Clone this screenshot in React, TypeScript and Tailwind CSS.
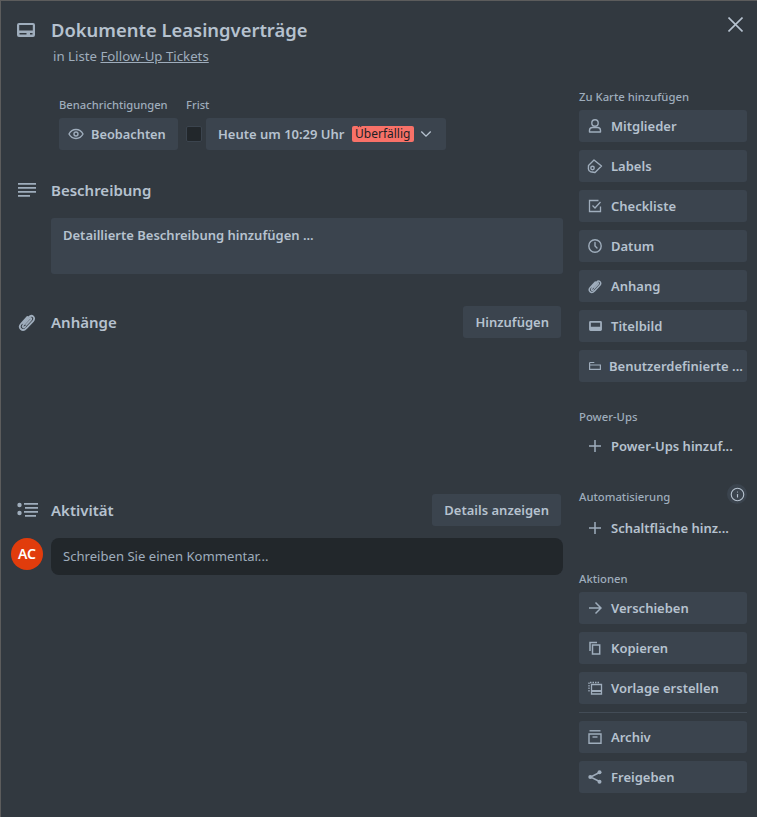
import { ReactNode } from 'react'
import { Info } from 'lucide-react'

const Paperclip = ({ size = 16 }: { size?: number }) => (
  <svg width={size} height={size} viewBox="0 0 24 24" fill="none" stroke="currentColor" strokeWidth="2.2" strokeLinecap="round">
    <path d="M7.500 13.500l6.800-7.300c1.600-1.700 3.900-1.900 5.300-.6 1.400 1.300 1.300 3.600-.3 5.300l-8 8.500c-2.200 2.300-5 2.600-6.700 1-1.700-1.600-1.500-4.300.6-6.600L12.500 6" />
    <path d="M11 15.500l5.600-6c.7-.8.8-1.600.3-2.100-.6-.5-1.400-.4-2.100.4l-7.200 7.700c-1 1.100-1.100 2.100-.5 2.700.7.6 1.700.4 2.700-.6" />
  </svg>
)

const cardOutline = 'M2 0h14a2 2 0 0 1 2 2v10a2 2 0 0 1-2 2H2a2 2 0 0 1-2-2V2a2 2 0 0 1 2-2z'

const CardIcon = () => (
  <svg width="18" height="14" viewBox="0 0 18 14" fill="currentColor">
    <path fillRule="evenodd" d={`${cardOutline}M2.200 2v5.600h13.600V2zM2.500 10v1.600h7V10zM13 10v1.600h2.500V10z`} />
  </svg>
)

const CoverIcon = () => (
  <svg width="13" height="10" viewBox="0 0 18 14" fill="currentColor">
    <path fillRule="evenodd" d={`${cardOutline}M2.500 2.500v5.500h13V2.500z`} />
  </svg>
)

const sideIcons: Record<string, ReactNode> = {
  user: (
    <svg width="16" height="16" viewBox="0 0 16 16" fill="none" stroke="currentColor" strokeWidth="1.400">
      <circle cx="8" cy="5" r="3.200" />
      <path d="M2.500 14v-1.500c0-1.600 1.300-3 3-3h5c1.700 0 3 1.400 3 3V14z" strokeLinejoin="round" />
    </svg>
  ),
  label: (
    <svg width="16" height="16" viewBox="0 0 16 16" fill="none" stroke="currentColor" strokeWidth="1.400" strokeLinejoin="round">
      <path d="M7 2l7.500 6L8 14.500l-4.500-.8c-1.300-.5-2-1.300-2.100-2.700L1.500 7.500z" />
      <circle cx="5.500" cy="10" r="1.700" />
    </svg>
  ),
  check: (
    <svg width="16" height="16" viewBox="0 0 16 16" fill="none" stroke="currentColor" strokeWidth="1.300">
      <path d="M13.500 8.500v5h-11v-11h9" />
      <path d="M5.500 7.500L8 10l5.500-6" />
    </svg>
  ),
  clock: (
    <svg width="16" height="16" viewBox="0 0 16 16" fill="none" stroke="currentColor" strokeWidth="1.400" strokeLinecap="round">
      <circle cx="8" cy="8" r="6.200" />
      <path d="M8 4.500V8l2 2" />
    </svg>
  ),
  clip: <Paperclip size={16} />,
  cover: <CoverIcon />,
  custom: (
    <svg width="12" height="12" viewBox="0 0 12 12" fill="none" stroke="currentColor" strokeWidth="1.200">
      <path d="M.6 5h10.800v4.400H.6z" />
      <path d="M.6 5V3.200c0-.4.300-.7.700-.7h4" />
    </svg>
  ),
  plus: (
    <svg width="14" height="14" viewBox="0 0 14 14" stroke="currentColor" strokeWidth="1.500">
      <path d="M7 1v12M1 7h12" />
    </svg>
  ),
  arrow: (
    <svg width="14" height="14" viewBox="0 0 14 14" fill="none" stroke="currentColor" strokeWidth="1.500">
      <path d="M1 7h12M7.500 1.500L13 7l-5.500 5.500" />
    </svg>
  ),
  copy: (
    <svg width="16" height="16" viewBox="0 0 16 16" fill="none" stroke="currentColor" strokeWidth="1.500">
      <path d="M5.500 5h7.200v9H5.500z" />
      <path d="M3 11V2.500h7" />
    </svg>
  ),
  template: (
    <svg width="16" height="16" viewBox="0 0 16 16" fill="none" stroke="currentColor" strokeWidth="1.300">
      <path d="M4.500 4.500h10v9.500h-10z" />
      <path d="M4.500 11h10" strokeWidth="2" />
      <path d="M2 11.500v-9h10" strokeDasharray="1.500 1" />
    </svg>
  ),
  archive: (
    <svg width="16" height="16" viewBox="0 0 16 16" fill="none" stroke="currentColor" strokeWidth="1.400">
      <path d="M2.500 1.800h11" />
      <path d="M2 5h12v9.200H2z" />
      <path d="M5.500 8h5" />
    </svg>
  ),
  share: (
    <svg width="16" height="16" viewBox="0 0 16 16" fill="currentColor">
      <path d="M12.500 3.500L3.500 8l9 4.500" fill="none" stroke="currentColor" strokeWidth="1.400" />
      <circle cx="12.500" cy="3.200" r="2" />
      <circle cx="3.300" cy="8" r="2" />
      <circle cx="12.500" cy="12.800" r="2" />
    </svg>
  ),
}

function SideButton({ icon, label, flat, tight }: { icon: string; label: string; flat?: boolean; tight?: boolean }) {
  return (
    <button className={`flex h-8 w-[168px] items-center rounded-[3px] pl-[8px] text-[13px] font-semibold whitespace-nowrap text-[#b6c2cf] ${flat ? '' : 'bg-[#3b444e]'} ${tight ? 'gap-[6px]' : 'gap-2'}`}>
      <span className="flex w-[16px] shrink-0 justify-center text-[#9fadbc]">{sideIcons[icon]}</span>
      <span className="pt-[2px]">{label}</span>
    </button>
  )
}

function SideLabel({ children, gap }: { children: ReactNode; gap?: boolean }) {
  return <div className={`h-[16px] text-[11.3px] leading-4 font-medium text-[#9fadbc] ${gap ? 'mb-[7px]' : 'mb-[5px]'}`}>{children}</div>
}

function SectionHead({ icon, title, action }: { icon: ReactNode; title: string; action?: string }) {
  return (
    <div className="flex h-8 items-center">
      <span className="flex w-[34px] shrink-0 text-[#9fadbc]">{icon}</span>
      <h3 className="text-[15px] font-semibold text-[#b6c2cf]">{title}</h3>
      {action && (
        <button className="mr-[2px] ml-auto h-8 rounded-[3px] bg-[#3b444e] px-3 pt-[2px] text-[13px] font-semibold text-[#b6c2cf]">
          {action}
        </button>
      )}
    </div>
  )
}

export default function App() {
  return (
    <div className="h-[817px] w-[757px] overflow-hidden border-t border-l border-[#5c5c5c] bg-[#323940] font-['Noto_Sans',sans-serif]">
      <div className="relative flex">
        <button className="absolute top-[16px] right-[14px] text-[#b6c2cf]">
          <svg className="block" width="15" height="15" viewBox="0 0 15 15" stroke="currentColor" strokeWidth="1.600">
            <path d="M.5.500l14 14M14.500.500l-14 14" />
          </svg>
        </button>

        {/* main column */}
        <div className="ml-[16px] w-[546px] shrink-0">
          <div className="flex items-center pt-[15px]">
            <span className="flex w-[34px] text-[#9fadbc]"><CardIcon /></span>
            <h2 className="text-[18.4px] leading-7 font-semibold text-[#b6c2cf]">Dokumente Leasingverträge</h2>
          </div>
          <p className="mt-[2px] ml-[36px] text-[13.25px] leading-5 text-[#9fadbc]">
            in Liste <span className="underline">Follow-Up Tickets</span>
          </p>

          <div className="mt-[31px] ml-[42px] flex">
            <div className="mr-2">
              <div className="mb-[5px] text-[11.2px] leading-4 font-medium text-[#9fadbc]">Benachrichtigungen</div>
              <button className="flex h-8 w-[119px] items-center gap-[7px] rounded-[3px] bg-[#3b444e] pl-[9px] text-[12.8px] font-semibold text-[#b6c2cf]">
                <svg width="16" height="16" viewBox="0 0 16 16" fill="none" stroke="#9fadbc" strokeWidth="1.400">
                  <path d="M1 8c1.600-3 4-4.500 7-4.500S13.400 5 15 8c-1.600 3-4 4.500-7 4.500S2.600 11 1 8z" />
                  <circle cx="8" cy="8" r="2" />
                </svg>
                <span className="pt-[2px]">Beobachten</span>
              </button>
            </div>
            <div>
              <div className="mb-[5px] text-[11.2px] leading-4 font-medium text-[#9fadbc]">Frist</div>
              <div className="flex items-center">
                <span className="mr-[4px] h-4 w-4 rounded-[2px] border border-[#3b444e] bg-[#22272b]" />
                <button className="flex h-8 w-[240px] items-center rounded-[3px] bg-[#3b444e] pl-[12px] text-[13px] font-semibold text-[#b6c2cf]">
                  <span className="pt-[2px]">Heute um 10:29 Uhr</span>
                  <span className="ml-[7px] rounded-[2px] bg-[#f87168] px-[3.5px] text-xs leading-4 font-normal text-[#1d2125]">Überfällig</span>
                  <svg className="ml-[6px]" width="12" height="12" viewBox="0 0 14 14" fill="none" stroke="#b6c2cf" strokeWidth="1.600">
                    <path d="M1.500 4l5.500 5.500L12.500 4" />
                  </svg>
                </button>
              </div>
            </div>
          </div>

          <div className="mt-[24px]">
            <SectionHead
              title="Beschreibung"
              icon={
                <svg className="ml-px" width="18" height="14" viewBox="0 0 18 14" fill="currentColor">
                  <path d="M0 0h18v1.800H0zM0 4h18v1.800H0zM0 8h18v1.800H0zM0 12h12v1.800H0z" />
                </svg>
              }
            />
            <div className="mt-[12px] ml-[34px] h-14 w-[512px] rounded-[3px] bg-[#3b444e] px-3 pt-[7px] text-[13px] leading-5 font-semibold text-[#b6c2cf]">
              Detaillierte Beschreibung hinzufügen ...
            </div>
          </div>

          <div className="mt-[32px]">
            <SectionHead title="Anhänge" action="Hinzufügen" icon={<Paperclip size={20} />} />
          </div>

          <div className="mt-[156px]">
            <SectionHead
              title="Aktivität"
              action="Details anzeigen"
              icon={
                <svg width="22" height="16" viewBox="0 0 22 16" fill="currentColor">
                  <circle cx="2.500" cy="3" r="2.200" />
                  <circle cx="2.500" cy="11" r="2.200" />
                  <path d="M7 1h14v1.700H7zM8 5h13v1.700H8zM7 9h14v1.700H7zM8 13h11v1.700H8z" />
                </svg>
              }
            />
            <div className="mt-[12px] -ml-[6px] flex">
              <span className="flex h-8 w-8 items-center justify-center rounded-full bg-[#e13c0c] text-sm font-semibold text-white">AC</span>
              <div className="ml-2 h-[37px] w-[512px] rounded-lg bg-[#22272b] px-3 text-[13.1px] leading-[36px] text-[#9fadbc]">
                Schreiben Sie einen Kommentar...
              </div>
            </div>
          </div>
        </div>

        {/* sidebar */}
        <div className="ml-[16px] w-[168px] shrink-0 pt-[88px]">
          <SideLabel>Zu Karte hinzufügen</SideLabel>
          <div className="flex flex-col gap-2">
            <SideButton icon="user" label="Mitglieder" />
            <SideButton icon="label" label="Labels" />
            <SideButton icon="check" label="Checkliste" />
            <SideButton icon="clock" label="Datum" />
            <SideButton icon="clip" label="Anhang" />
            <SideButton icon="cover" label="Titelbild" />
            <SideButton icon="custom" label="Benutzerdefinierte ..." tight />
          </div>

          <div className="mt-[27px]">
            <SideLabel>Power-Ups</SideLabel>
            <SideButton icon="plus" label="Power-Ups hinzuf..." flat />
          </div>

          <div className="relative mt-[27px]">
            <SideLabel gap>Automatisierung</SideLabel>
            <span className="absolute top-[-5px] right-0 flex h-5 w-5 items-center justify-center rounded-full bg-[#3b444e] text-[#b6c2cf]">
              <Info size={15} strokeWidth={1.800} />
            </span>
            <SideButton icon="plus" label="Schaltfläche hinz..." flat />
          </div>

          <div className="mt-[27px]">
            <SideLabel>Aktionen</SideLabel>
            <div className="flex flex-col gap-2">
              <SideButton icon="arrow" label="Verschieben" />
              <SideButton icon="copy" label="Kopieren" />
              <SideButton icon="template" label="Vorlage erstellen" />
            </div>
            <hr className="my-2 border-[#434c56]" />
            <div className="flex flex-col gap-2">
              <SideButton icon="archive" label="Archiv" />
              <SideButton icon="share" label="Freigeben" />
            </div>
          </div>
        </div>
      </div>
    </div>
  )
}
